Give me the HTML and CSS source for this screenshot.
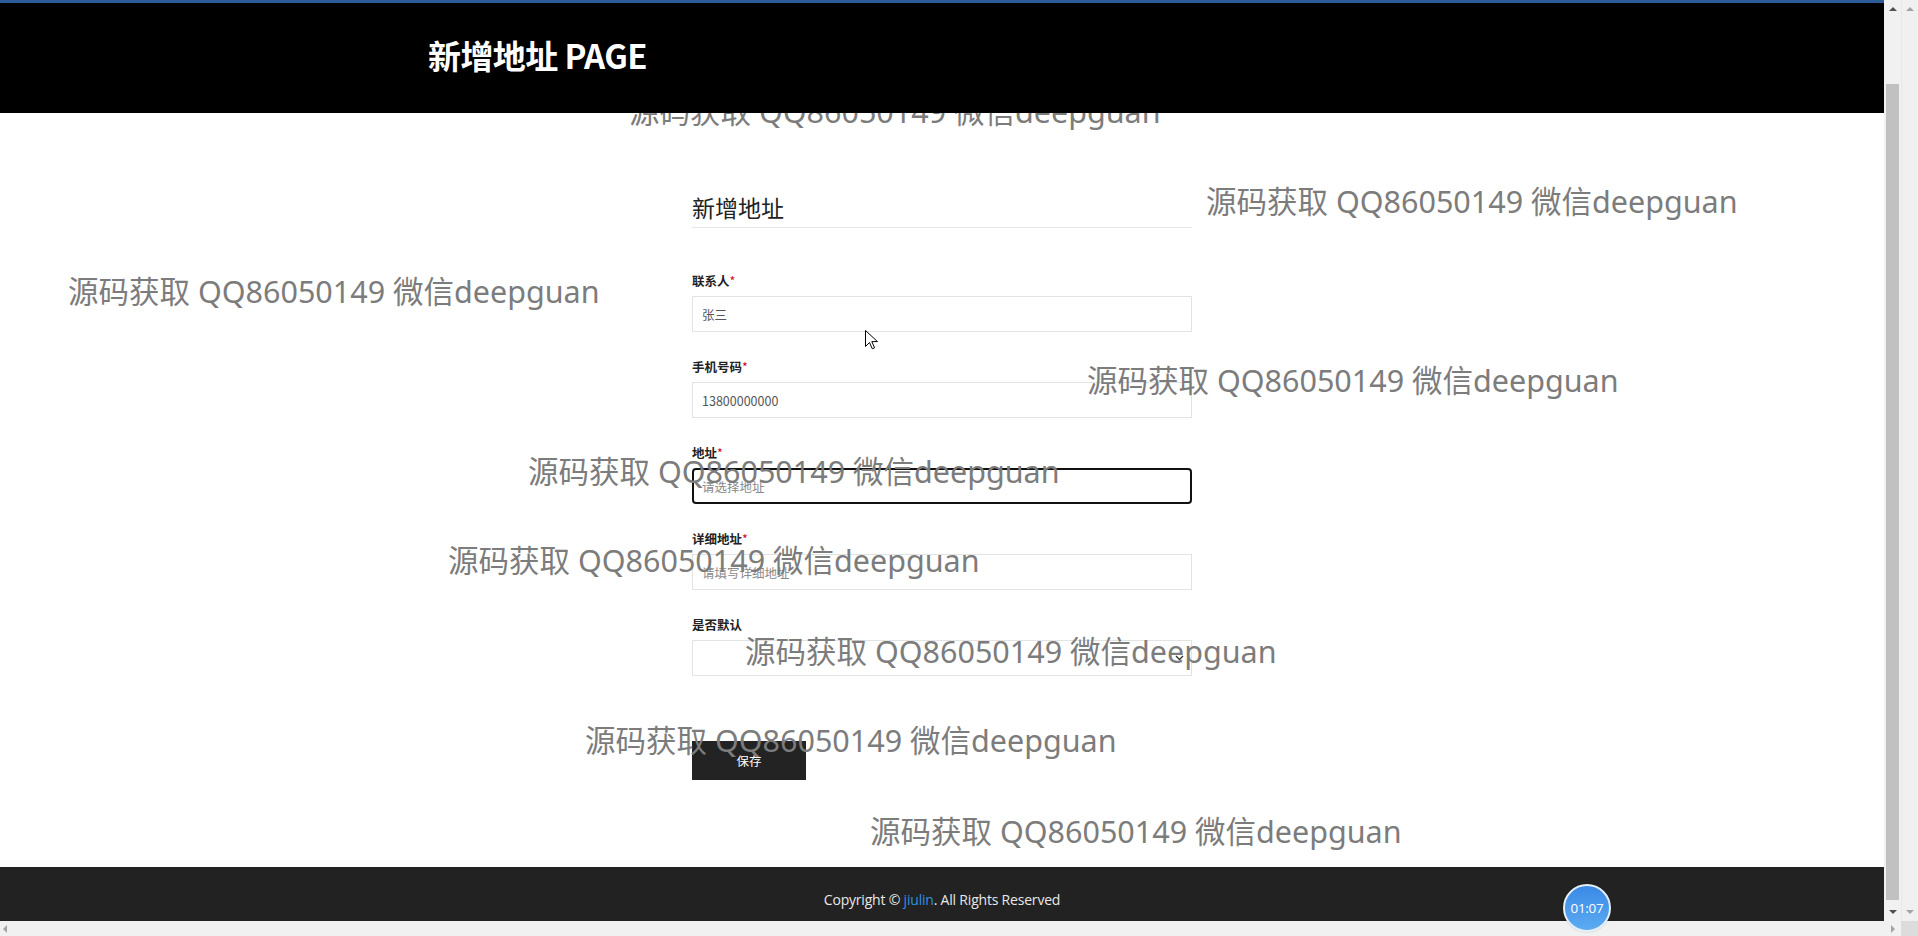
FILE: index.html
```html
<!DOCTYPE html>
<html lang="zh-CN">
<head>
<meta charset="utf-8">
<title>新增地址</title>
<link rel="stylesheet" href="styles.css">
</head>
<body>
<div class="window">
  <div class="viewport">
    <div class="page">
      <header class="topbar">
        <div class="topbar-inner"><h1 class="brand">新增地址 PAGE</h1></div>
      </header>
      <main class="main">
        <form class="form">
          <h2 class="form-title">新增地址</h2>
          <div class="group">
            <label class="label">联系人<span class="req">*</span></label>
            <div class="input">张三</div>
          </div>
          <div class="group">
            <label class="label">手机号码<span class="req">*</span></label>
            <div class="input">13800000000</div>
          </div>
          <div class="group">
            <label class="label">地址<span class="req">*</span></label>
            <div class="input focused placeholder">请选择地址</div>
          </div>
          <div class="group">
            <label class="label">详细地址<span class="req">*</span></label>
            <div class="input placeholder">请填写详细地址</div>
          </div>
          <div class="group">
            <label class="label">是否默认</label>
            <div class="input select">
              <svg class="chev" width="9" height="6" viewBox="0 0 9 6"><path d="M1 1l3.5 3.5L8 1" fill="none" stroke="#333" stroke-width="1.4"/></svg>
            </div>
          </div>
          <button type="button" class="btn">保存</button>
        </form>
      </main>
      <footer class="footer">Copyright © <span class="link">jiulin</span>. All Rights Reserved</footer>

      <div class="wm" style="left:629px;top:91px">源码获取 QQ86050149 微信deepguan</div>
      <div class="wm" style="left:1206px;top:181px">源码获取 QQ86050149 微信deepguan</div>
      <div class="wm" style="left:68px;top:271px">源码获取 QQ86050149 微信deepguan</div>
      <div class="wm" style="left:1087px;top:360px">源码获取 QQ86050149 微信deepguan</div>
      <div class="wm" style="left:528px;top:451px">源码获取 QQ86050149 微信deepguan</div>
      <div class="wm" style="left:448px;top:540px">源码获取 QQ86050149 微信deepguan</div>
      <div class="wm" style="left:745px;top:631px">源码获取 QQ86050149 微信deepguan</div>
      <div class="wm" style="left:585px;top:720px">源码获取 QQ86050149 微信deepguan</div>
      <div class="wm" style="left:870px;top:811px">源码获取 QQ86050149 微信deepguan</div>

      <svg class="cursor" width="13" height="20" viewBox="0 0 13 20"><path d="M0.5 0.5v16l4-4 2.8 6.3 2.3-1-2.8-6.2h5.7z" fill="#fff" stroke="#000" stroke-width="1" stroke-linejoin="round"/></svg>
    </div>
    <div class="vbar">
      <span class="arr up dark"></span>
      <div class="track"><div class="thumb"></div></div>
      <span class="arr down dark"></span>
    </div>
  </div>
  <div class="vbar outer">
    <span class="arr up"></span>
    <div class="track"></div>
    <span class="arr down"></span>
  </div>
</div>
<div class="hrow">
  <div class="hbar">
    <span class="arr left"></span>
    <span class="arr right"></span>
  </div>
  <div class="corner"></div>
</div>
<div class="timer">01:07</div>
</body>
</html>
```

FILE: styles.css
```css
html, body {
  margin: 0;
  padding: 0;
  height: 936px;
  overflow: hidden;
}
body {
  font-family: "Noto Sans", "Noto Sans CJK SC", sans-serif;
  display: flex;
  flex-direction: column;
  position: relative;
  background: #fff;
}
.window {
  display: flex;
  height: 921px;
}
.viewport {
  display: flex;
  width: 1901px;
}
.page {
  position: relative;
  width: 1884px;
  display: flex;
  flex-direction: column;
  overflow: hidden;
}
.topbar {
  position: relative;
  z-index: 2;
  background: #000;
  border-top: 3px solid #2c5d98;
  height: 110px;
  display: flex;
  align-items: center;
}
.topbar-inner {
  width: 1028px;
  margin: 0 auto;
}
.brand {
  margin: 0;
  color: #fff;
  font-family: "Noto Sans CJK SC", sans-serif;
  font-size: 33px;
  font-weight: 700;
  letter-spacing: -0.6px;
  line-height: 44px;
  padding-bottom: 6px;
}
.main {
  flex: 1;
  padding-top: 78px;
}
.form {
  width: 500px;
  margin: 0 auto;
  display: flex;
  flex-direction: column;
}
.form-title {
  margin: 0 0 44px;
  font-family: "Noto Sans CJK SC", sans-serif;
  font-weight: 400;
  font-size: 23px;
  line-height: 32px;
  color: #222;
  padding-bottom: 4px;
  border-bottom: 1px solid #e6e6e6;
}
.group {
  display: flex;
  flex-direction: column;
  margin-bottom: 26px;
}
.label {
  font-family: "Noto Sans CJK SC", sans-serif;
  font-size: 12.5px;
  font-weight: 700;
  line-height: 18px;
  color: #222;
  margin-bottom: 6px;
}
.req {
  color: #d0021b;
  font-weight: 400;
}
.input {
  position: relative;
  box-sizing: border-box;
  height: 36px;
  border: 1px solid #e3e3e3;
  padding: 0 9px;
  display: flex;
  align-items: center;
  font-family: "Noto Sans CJK SC", sans-serif;
  font-size: 12.5px;
  color: #555;
}
.placeholder {
  color: #8a8a8a;
}
.focused {
  border: 2px solid #111;
  border-radius: 4px;
  padding: 0 8px;
}
.select {
  justify-content: flex-end;
  padding-right: 7px;
}
.chev {
  display: block;
}
.btn {
  margin-top: 39px;
  width: 114px;
  height: 39px;
  border: none;
  background: #232323;
  color: #fff;
  font-family: "Noto Sans CJK SC", sans-serif;
  font-size: 12.5px;
  padding: 0;
  cursor: pointer;
}
.footer {
  height: 54px;
  box-sizing: border-box;
  padding-top: 24px;
  background: #222;
  color: #e8e8e8;
  text-align: center;
  font-family: "Open Sans", "Noto Sans CJK SC", sans-serif;
  font-size: 14px;
  letter-spacing: -0.2px;
  line-height: 18px;
}
.link {
  color: #2f8fe0;
}
.wm {
  position: absolute;
  z-index: 1;
  white-space: nowrap;
  font-family: "Noto Sans", "Noto Sans CJK SC", sans-serif;
  font-size: 30.5px;
  line-height: 40px;
  color: #7c7c7c;
  pointer-events: none;
}
.cursor {
  position: absolute;
  z-index: 3;
  left: 865px;
  top: 330px;
}
.vbar {
  width: 17px;
  background: #f1f1f1;
  display: flex;
  flex-direction: column;
  align-items: center;
}
.vbar.outer {
  background: #f0f0f0;
  border-left: 1px solid #e8e8e8;
  box-sizing: border-box;
}
.track {
  flex: 1;
  width: 100%;
  display: flex;
  flex-direction: column;
}
.thumb {
  margin: 73px 2px 10px;
  flex: 1;
  background: #c1c1c1;
}
.arr {
  width: 0;
  height: 0;
  border: 4px solid transparent;
}
.arr.up {
  border-top: 0;
  border-bottom: 4px solid #a3a3a3;
  margin-top: 7px;
}
.arr.down {
  border-bottom: 0;
  border-top: 4px solid #a3a3a3;
  margin-bottom: 7px;
}
.arr.up.dark { border-bottom-color: #505050; }
.arr.down.dark { border-top-color: #505050; }
.hrow {
  display: flex;
  height: 15px;
}
.hbar {
  width: 1901px;
  background: #f1f1f1;
  display: flex;
  align-items: center;
  justify-content: space-between;
  padding: 0 6px 0 3px;
  box-sizing: border-box;
}
.arr.left {
  border-left: 0;
  border-right: 4px solid #a3a3a3;
}
.arr.right {
  border-right: 0;
  border-left: 4px solid #a3a3a3;
}
.corner {
  width: 17px;
  background: #dcdcdc;
}
.timer {
  position: absolute;
  left: 1563px;
  top: 884px;
  width: 44px;
  height: 44px;
  border-radius: 50%;
  border: 2px solid #e4eef8;
  background: linear-gradient(#3a8ae6, #5cabf2);
  color: #fff;
  font-family: "Open Sans", sans-serif;
  font-size: 13.5px;
  letter-spacing: -0.3px;
  display: flex;
  align-items: center;
  justify-content: center;
  box-shadow: 0 0 2px rgba(0,0,0,0.2);
}
```
